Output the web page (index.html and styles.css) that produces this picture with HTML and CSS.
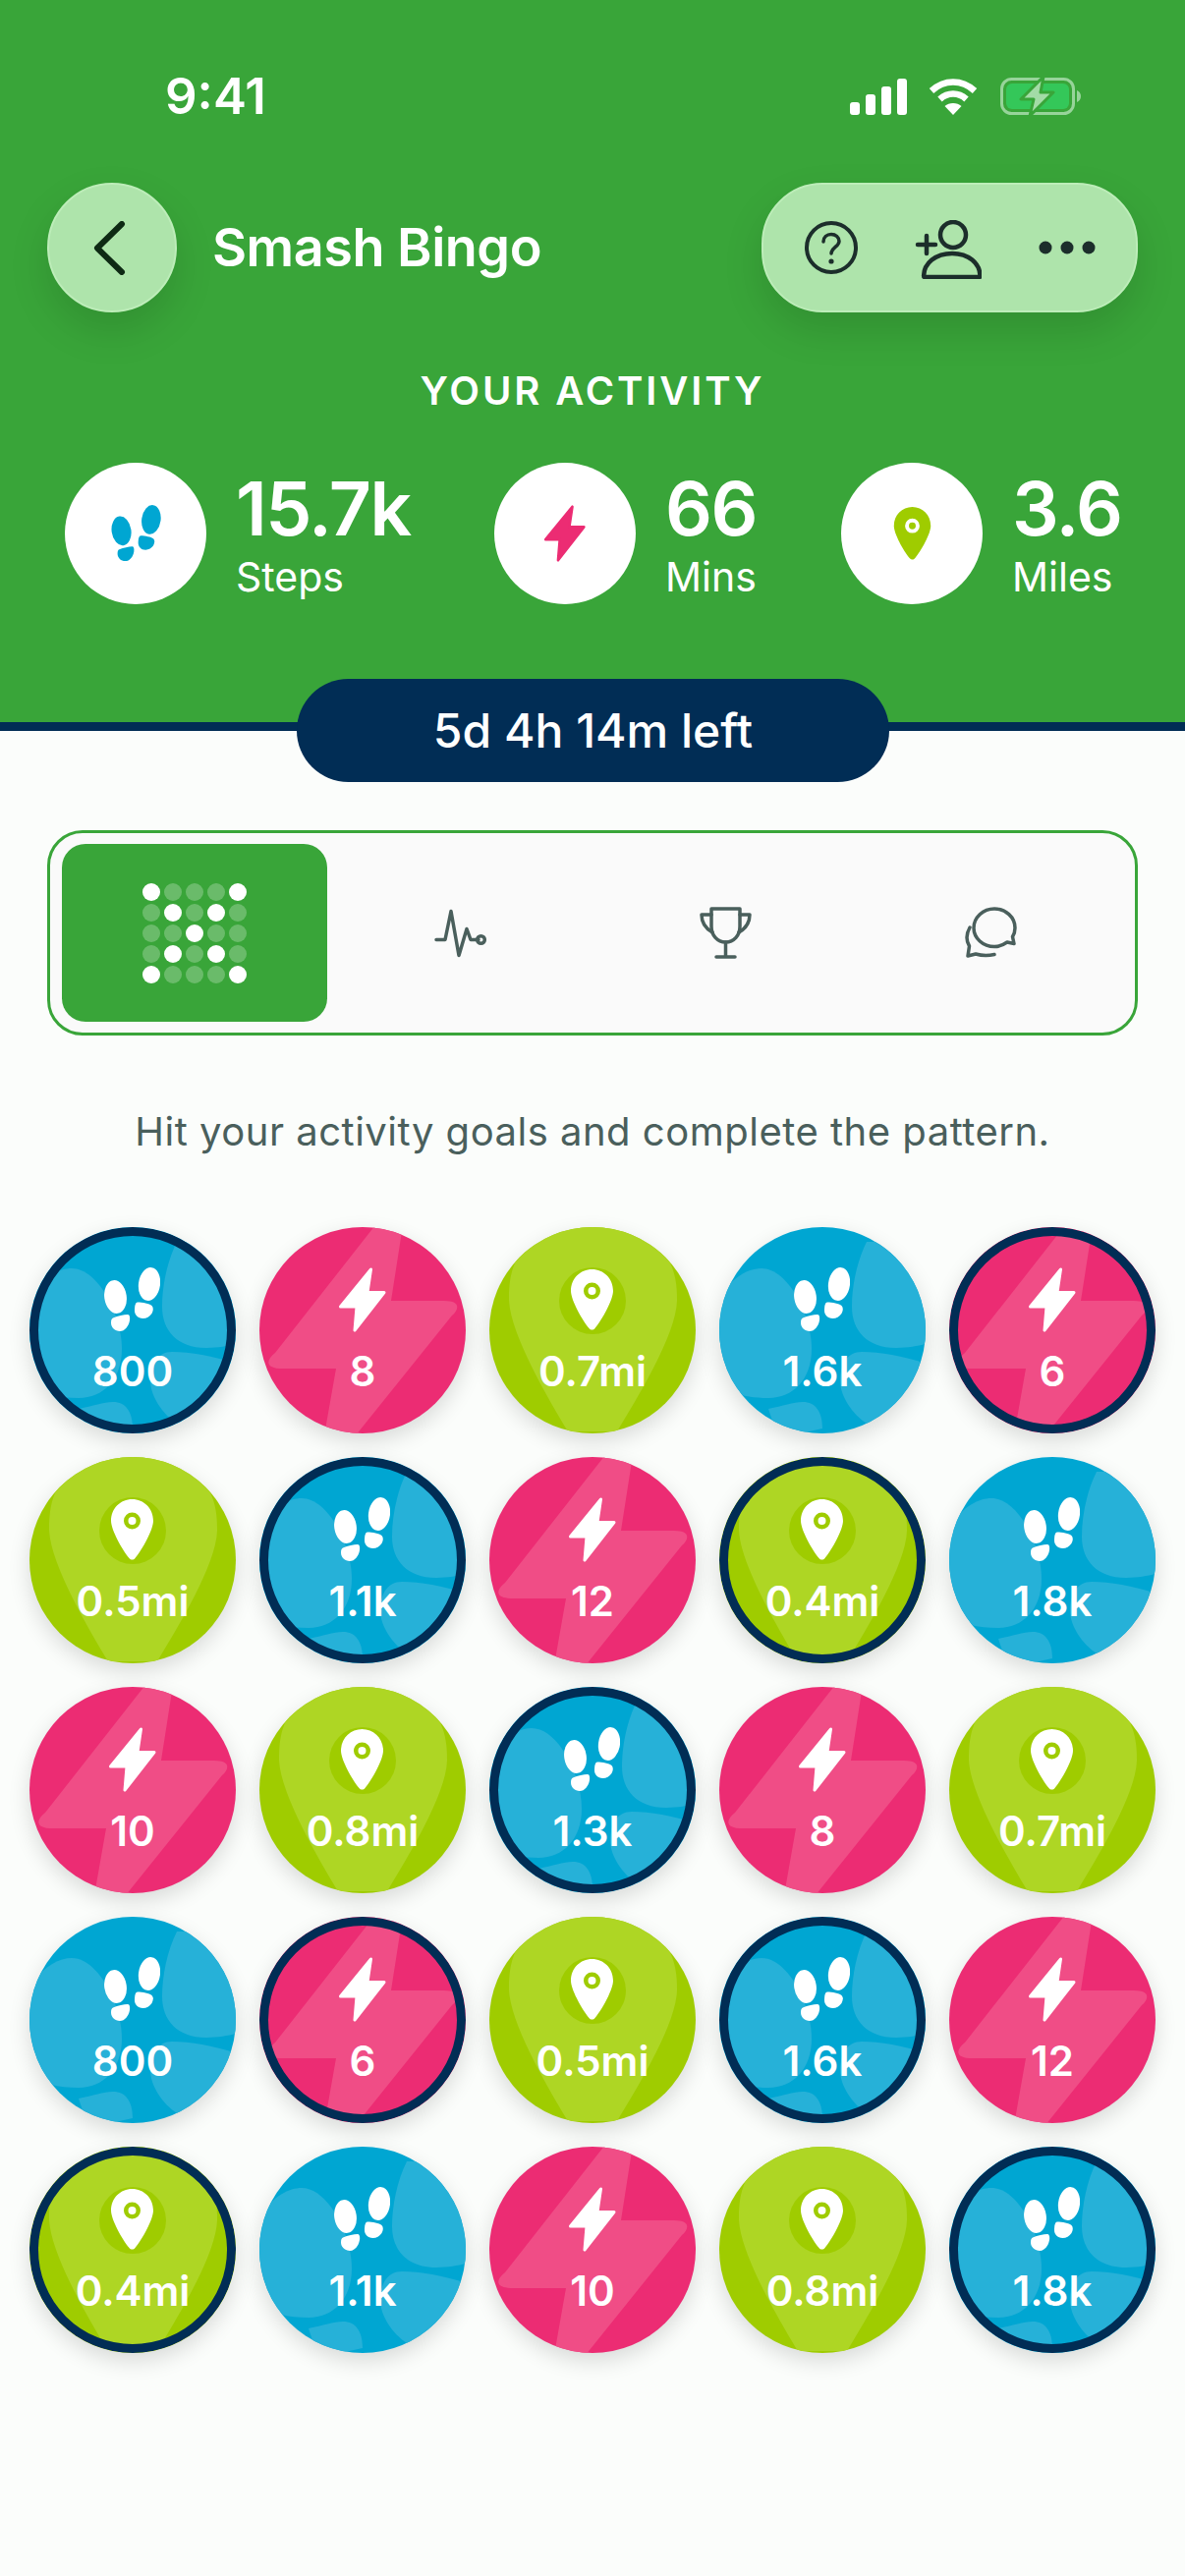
FILE: index.html
```html
<!DOCTYPE html>
<html lang="en">
<head>
<meta charset="utf-8">
<title>Smash Bingo</title>
<link rel="stylesheet" href="styles.css">
</head>
<body>
<svg class="defs" width="0" height="0" aria-hidden="true">
  <symbol id="feet" viewBox="76 41 57 66">
    <ellipse cx="87.500" cy="71" rx="11.300" ry="17" transform="rotate(-8 87.500 71)"/>
    <path d="M85 92.500C90 90.500 96 89 100 89c2 0 2.500 3 2 6-1 6-5 11-10 11-5 0-9-4-9-8.500 0-2.500.5-4.500 2-5z"/>
    <ellipse cx="122" cy="58" rx="11" ry="17" transform="rotate(8 122 58)"/>
    <path d="M110 76.500c5 0 12 1.500 14.500 3.500 2 2 1.500 5 0 8-2 3-5.500 5-9 5-5.500 0-8.500-4-8.500-8 0-4 .5-8.500 3-8.500z"/>
  </symbol>
  <symbol id="bolt" viewBox="80 41 50 66">
    <path stroke-width="3" stroke-linejoin="round" d="M113.500 43 110 66.500h17L97 105l2-24H82.500z"/>
  </symbol>
  <symbol id="pin" viewBox="83 43 43 62">
    <path fill-rule="evenodd" d="M104.500 43C116.500 43 126 52.500 126 65c0 9-11 29-18.500 38-1.600 2-4.400 2-6 0C94 94 83 74 83 65c0-12.500 9.500-22 21.500-22zm0 13.500a8.500 8.500 0 1 0 0 17 8.500 8.500 0 0 0 0-17zm0 4.500a4 4 0 1 1 0 8 4 4 0 0 1 0-8z"/>
  </symbol>
  <symbol id="art-steps" viewBox="0 0 210 210">
    <g fill="#26b1d8">
      <path d="M0 70c15-20 30-28 43-28 27 0 51 48 51 82 0 31-19 50-44 50-20 0-40-4-50-14z"/>
      <path d="M150 15c-10 20-15 45-15 66 0 24 15 42 45 42 15 0 25-3 35-5V15z"/>
      <path d="M215 140c-25-8-50-13-70-13-15 0-22 13-22 29 0 16 12 34 27 44h65z"/>
      <path d="M50 185c15-3 25-7 35-7 13 0 20 10 20 27l-45 10z"/>
    </g>
  </symbol>
  <symbol id="art-mins" viewBox="0 0 210 210">
    <path fill="#f04d86" d="M118-2h28l-12 77h54c16 0 16 8 8 15L98 212H66l12-68H24c-18 0-18-8-8-16z"/>
  </symbol>
  <symbol id="art-miles" viewBox="0 0 210 210">
    <path fill="#aed624" d="M30 29C20 45 20 64 20 75c2 35 40 100 60 133h50c20-33 60-98 61-133 0-15-1-30-11-46V0H30z"/>
    <circle fill="#9fcc00" cx="105" cy="75" r="34"/>
  </symbol>
</svg>

<header class="top">
  <div class="status">
    <span class="clock">9:41</span>
    <div class="status-icons">
      <svg class="ic-signal" viewBox="0 0 58 37" fill="#fff"><rect x="0" y="24" width="10" height="13" rx="3"/><rect x="16" y="16" width="10" height="21" rx="3"/><rect x="32" y="8" width="10" height="29" rx="3"/><rect x="48" y="0" width="10" height="37" rx="3"/></svg>
      <svg class="ic-wifi" viewBox="0 0 50 37" fill="none" stroke="#fff" stroke-width="6.500"><path d="M3 12.500C9 7 16.500 3.500 25 3.500S41 7 47 12.500"/><path d="M11.500 21c3.700-3.400 8.300-5.500 13.500-5.500s9.800 2.100 13.500 5.500"/><path fill="#fff" stroke="none" d="M25 37l-8.500-9c2.300-2 5.200-3 8.500-3s6.200 1 8.500 3z"/></svg>
      <svg class="ic-battery" viewBox="0 0 82 40"><rect x="1.500" y="2.500" width="73" height="35" rx="10" fill="none" stroke="#97d49a" stroke-width="3"/><rect x="6" y="7" width="64" height="26" rx="6" fill="#34c759"/><path fill="#97d49a" d="M78 14c2.500 1 4 3.300 4 6s-1.500 5-4 6z"/><path fill="#a3dba6" stroke="#39a539" stroke-width="3" stroke-linejoin="round" d="M44 0 21 23h13l-4 17 24-24H41z"/></svg>
    </div>
  </div>
  <nav class="nav">
    <button class="back" aria-label="Back">
      <svg class="ic-back" viewBox="0 0 33 55" fill="none" stroke="#0e2a14" stroke-width="6" stroke-linecap="round" stroke-linejoin="round"><path d="M29 3 4 27.500 29 52"/></svg>
    </button>
    <h1 class="title">Smash Bingo</h1>
    <div class="actions">
      <svg class="ic-help" viewBox="0 0 54 54" fill="none" stroke="#1c2e2b" stroke-width="4"><circle cx="27" cy="27" r="25"/><path stroke-width="3.500" stroke-linecap="round" d="M19 21c0-4.500 3.500-7.500 8-7.500s8 3 8 7c0 5.500-8 6.500-8 12.500"/><circle cx="27" cy="41" r="2.600" fill="#1c2e2b" stroke="none"/></svg>
      <svg class="ic-add" viewBox="0 0 68 60" fill="none" stroke="#1c2e2b" stroke-width="4.500" stroke-linecap="round" stroke-linejoin="round"><circle cx="39" cy="15" r="13"/><path d="M10 58c-.8 0-.9-.5-.9-1.500C9.500 44 21 34 38 34s28 10 28.500 22.500c0 1-.2 1.500-.9 1.500z"/><path d="M3 25h18M12 16v18"/></svg>
      <svg class="ic-more" viewBox="0 0 58 14" fill="#1c2e2b"><circle cx="7" cy="7" r="6.500"/><circle cx="29" cy="7" r="6.500"/><circle cx="51" cy="7" r="6.500"/></svg>
    </div>
  </nav>
  <h2 class="activity">YOUR ACTIVITY</h2>
  <div class="stats">
    <div class="stat">
      <div class="stat-disc"><svg class="stat-feet" fill="#00a6d2"><use href="#feet"/></svg></div>
      <div class="stat-text"><strong>15.7k</strong><span>Steps</span></div>
    </div>
    <div class="stat">
      <div class="stat-disc"><svg class="stat-bolt" fill="#ec2c73" stroke="#ec2c73"><use href="#bolt"/></svg></div>
      <div class="stat-text"><strong>66</strong><span>Mins</span></div>
    </div>
    <div class="stat">
      <div class="stat-disc"><svg class="stat-pin" fill="#9fcc00"><use href="#pin"/></svg></div>
      <div class="stat-text"><strong>3.6</strong><span>Miles</span></div>
    </div>
  </div>
  <div class="timer">5d 4h 14m left</div>
</header>

<main class="main">
  <div class="tabs">
    <div class="tab tab-active">
      <div class="dots">
        <i class="on"></i><i></i><i></i><i></i><i class="on"></i>
        <i></i><i class="on"></i><i></i><i class="on"></i><i></i>
        <i></i><i></i><i class="on"></i><i></i><i></i>
        <i></i><i class="on"></i><i></i><i class="on"></i><i></i>
        <i class="on"></i><i></i><i></i><i></i><i class="on"></i>
      </div>
    </div>
    <div class="tab">
      <svg class="ic-tab" viewBox="0 0 53 48" fill="none" stroke="#4a5f5c" stroke-width="3.500" stroke-linecap="round" stroke-linejoin="round"><path d="M2 31h9l6-29 8 45 8-27 4 11h8"/><circle cx="47.500" cy="31" r="3.800"/></svg>
    </div>
    <div class="tab">
      <svg class="ic-tab" viewBox="0 0 53 53" fill="none" stroke="#4a5f5c" stroke-width="3.500" stroke-linecap="round" stroke-linejoin="round"><path d="M12 2h29v18c0 9-6 16-14.500 16S12 29 12 20z"/><path d="M12 8H2c0 8 4 14 11 18M41 8h10c0 8-4 14-11 18"/><path d="M26.500 36v15M17 51h19"/></svg>
    </div>
    <div class="tab">
      <svg class="ic-tab" viewBox="0 0 53 53" fill="none" stroke="#4a5f5c" stroke-width="3.500" stroke-linecap="round" stroke-linejoin="round"><path d="M30 2c11.500 0 21 8.500 21 19.500 0 3.500-1 6.500-2.500 9l1.500 7-7-1.500C39.500 38.500 35 40.500 30 40.500c-11.500 0-21-8.500-21-19S18.500 2 30 2z"/><path d="M5 21C1 28 1 34 4.500 40L3 50l8-2c7 2 12 2 19 .5"/></svg>
    </div>
  </div>
  <p class="hint">Hit your activity goals and complete the pattern.</p>
  <section class="board">
    <div class="cell steps ring"><svg class="art"><use href="#art-steps"/></svg><svg class="feet"><use href="#feet"/></svg><span class="label">800</span></div>
    <div class="cell mins"><svg class="art"><use href="#art-mins"/></svg><svg class="bolt"><use href="#bolt"/></svg><span class="label">8</span></div>
    <div class="cell miles"><svg class="art"><use href="#art-miles"/></svg><svg class="pin"><use href="#pin"/></svg><span class="label">0.7mi</span></div>
    <div class="cell steps"><svg class="art"><use href="#art-steps"/></svg><svg class="feet"><use href="#feet"/></svg><span class="label">1.6k</span></div>
    <div class="cell mins ring"><svg class="art"><use href="#art-mins"/></svg><svg class="bolt"><use href="#bolt"/></svg><span class="label">6</span></div>

    <div class="cell miles"><svg class="art"><use href="#art-miles"/></svg><svg class="pin"><use href="#pin"/></svg><span class="label">0.5mi</span></div>
    <div class="cell steps ring"><svg class="art"><use href="#art-steps"/></svg><svg class="feet"><use href="#feet"/></svg><span class="label">1.1k</span></div>
    <div class="cell mins"><svg class="art"><use href="#art-mins"/></svg><svg class="bolt"><use href="#bolt"/></svg><span class="label">12</span></div>
    <div class="cell miles ring"><svg class="art"><use href="#art-miles"/></svg><svg class="pin"><use href="#pin"/></svg><span class="label">0.4mi</span></div>
    <div class="cell steps"><svg class="art"><use href="#art-steps"/></svg><svg class="feet"><use href="#feet"/></svg><span class="label">1.8k</span></div>

    <div class="cell mins"><svg class="art"><use href="#art-mins"/></svg><svg class="bolt"><use href="#bolt"/></svg><span class="label">10</span></div>
    <div class="cell miles"><svg class="art"><use href="#art-miles"/></svg><svg class="pin"><use href="#pin"/></svg><span class="label">0.8mi</span></div>
    <div class="cell steps ring"><svg class="art"><use href="#art-steps"/></svg><svg class="feet"><use href="#feet"/></svg><span class="label">1.3k</span></div>
    <div class="cell mins"><svg class="art"><use href="#art-mins"/></svg><svg class="bolt"><use href="#bolt"/></svg><span class="label">8</span></div>
    <div class="cell miles"><svg class="art"><use href="#art-miles"/></svg><svg class="pin"><use href="#pin"/></svg><span class="label">0.7mi</span></div>

    <div class="cell steps"><svg class="art"><use href="#art-steps"/></svg><svg class="feet"><use href="#feet"/></svg><span class="label">800</span></div>
    <div class="cell mins ring"><svg class="art"><use href="#art-mins"/></svg><svg class="bolt"><use href="#bolt"/></svg><span class="label">6</span></div>
    <div class="cell miles"><svg class="art"><use href="#art-miles"/></svg><svg class="pin"><use href="#pin"/></svg><span class="label">0.5mi</span></div>
    <div class="cell steps ring"><svg class="art"><use href="#art-steps"/></svg><svg class="feet"><use href="#feet"/></svg><span class="label">1.6k</span></div>
    <div class="cell mins"><svg class="art"><use href="#art-mins"/></svg><svg class="bolt"><use href="#bolt"/></svg><span class="label">12</span></div>

    <div class="cell miles ring"><svg class="art"><use href="#art-miles"/></svg><svg class="pin"><use href="#pin"/></svg><span class="label">0.4mi</span></div>
    <div class="cell steps"><svg class="art"><use href="#art-steps"/></svg><svg class="feet"><use href="#feet"/></svg><span class="label">1.1k</span></div>
    <div class="cell mins"><svg class="art"><use href="#art-mins"/></svg><svg class="bolt"><use href="#bolt"/></svg><span class="label">10</span></div>
    <div class="cell miles"><svg class="art"><use href="#art-miles"/></svg><svg class="pin"><use href="#pin"/></svg><span class="label">0.8mi</span></div>
    <div class="cell steps ring"><svg class="art"><use href="#art-steps"/></svg><svg class="feet"><use href="#feet"/></svg><span class="label">1.8k</span></div>
  </section>
</main>
</body>
</html>
```
FILE: styles.css
```css
* { box-sizing: border-box; }
html, body { margin: 0; padding: 0; }
body {
  width: 1206px;
  height: 2622px;
  overflow: hidden;
  background: #fbfdfb;
  font-family: Inter, "Liberation Sans", sans-serif;
  color: #fff;
}
.defs { position: absolute; }

/* header */
.top {
  position: relative;
  height: 744px;
  background: #39a539;
  border-bottom: 9px solid #012d55;
}
.status {
  height: 186px;
  padding: 68px 106px 0 168px;
  display: flex;
  justify-content: space-between;
  align-items: flex-start;
}
.clock { font-size: 51px; line-height: 60px; font-weight: 600; }
.status-icons { display: flex; align-items: center; padding-top: 10px; }
.ic-signal { width: 58px; height: 37px; }
.ic-wifi { width: 50px; height: 37px; margin-left: 22px; }
.ic-battery { width: 82px; height: 40px; margin-left: 23px; }

.nav { display: flex; align-items: center; height: 132px; padding: 0 48px; }
.back {
  width: 132px;
  height: 132px;
  border-radius: 50%;
  border: 2px solid #bdedb9;
  background: #aee4ab;
  padding: 0;
  display: flex;
  align-items: center;
  justify-content: center;
  box-shadow: 0 18px 40px rgba(0, 0, 0, .13);
}
.ic-back { width: 33px; height: 55px; margin-right: 6px; }
.title { margin: 0 0 0 36px; font-size: 54px; line-height: 64px; font-weight: 600; letter-spacing: -.5px; }
.actions {
  margin-left: auto;
  width: 383px;
  height: 132px;
  border-radius: 62px;
  border: 2px solid #bdedb9;
  background: #aee4ab;
  display: flex;
  align-items: center;
  gap: 58px;
  padding-left: 42px;
  box-shadow: 0 18px 40px rgba(0, 0, 0, .13);
}
.ic-help { width: 54px; height: 54px; }
.ic-add { width: 68px; height: 60px; margin-top: 4px; }
.ic-more { width: 58px; height: 14px; }

.activity {
  margin: 56px 0 0;
  text-align: center;
  font-size: 40px;
  line-height: 48px;
  font-weight: 600;
  letter-spacing: 2.900px;
}
.stats {
  display: grid;
  grid-template-columns: 437px 353px auto;
  margin-top: 49px;
  padding-left: 66px;
}
.stat { display: flex; align-items: center; gap: 30px; }
.stat-disc {
  width: 144px;
  height: 144px;
  border-radius: 50%;
  background: #fff;
  display: flex;
  align-items: center;
  justify-content: center;
}
.stat-feet { width: 51px; height: 58px; }
.stat-bolt { width: 44px; height: 58px; }
.stat-pin { width: 39px; height: 54px; }
.stat-text { display: flex; flex-direction: column; padding-top: 4px; }
.stat-text strong { font-size: 75px; line-height: 80px; font-weight: 600; letter-spacing: -1.500px; }
.stat-text span { font-size: 41px; line-height: 50px; margin-top: 4px; font-weight: 400; }

.timer {
  position: absolute;
  left: 302px;
  bottom: -61px;
  width: 603px;
  height: 105px;
  border-radius: 53px;
  background: #012d55;
  text-align: center;
  font-size: 48px;
  line-height: 105px;
  font-weight: 500;
}

/* main */
.main { padding-top: 101px; }
.tabs {
  margin: 0 48px;
  height: 209px;
  padding: 11px 12px;
  border: 3px solid #39a539;
  border-radius: 36px;
  background: #fafafa;
  display: grid;
  grid-template-columns: repeat(4, 270px);
}
.tab { display: flex; align-items: center; justify-content: center; }
.tab-active { background: #39a539; border-radius: 24px; }
.dots { display: grid; grid-template-columns: repeat(5, 18px); gap: 3px 4px; }
.dots i { width: 18px; height: 18px; border-radius: 50%; background: rgba(255, 255, 255, .25); }
.dots .on { background: #fff; }
.ic-tab { width: 53px; height: 53px; }

.hint {
  margin: 71px 0 0;
  text-align: center;
  font-size: 40px;
  line-height: 54px;
  letter-spacing: .5px;
  color: #4a5f5c;
}
.board {
  margin-top: 70px;
  padding-left: 30px;
  display: grid;
  grid-template-columns: repeat(5, 210px);
  grid-auto-rows: 210px;
  gap: 24px;
}

/* bingo cell */
.cell {
  position: relative;
  width: 210px;
  height: 210px;
  border-radius: 50%;
  overflow: hidden;
  display: flex;
  flex-direction: column;
  align-items: center;
  justify-content: flex-end;
  padding-bottom: 40px;
  box-shadow: 0 8px 22px rgba(0, 0, 0, .14);
}
.steps { background: #00a6d2; }
.mins { background: #ec2c73; }
.miles { background: #9fcc00; }
.art { position: absolute; inset: 0; width: 210px; height: 210px; }
.feet, .bolt, .pin { position: absolute; fill: #fff; stroke: #fff; }
.feet { left: 76px; top: 41px; width: 57px; height: 66px; stroke: none; }
.bolt { left: 80px; top: 41px; width: 50px; height: 66px; }
.pin { left: 83px; top: 43px; width: 43px; height: 62px; stroke: none; }
.label { position: relative; font-size: 42px; line-height: 46px; font-weight: 600; }
.ring::after {
  content: "";
  position: absolute;
  inset: 0;
  border: 9px solid #012d55;
  border-radius: 50%;
}
```
